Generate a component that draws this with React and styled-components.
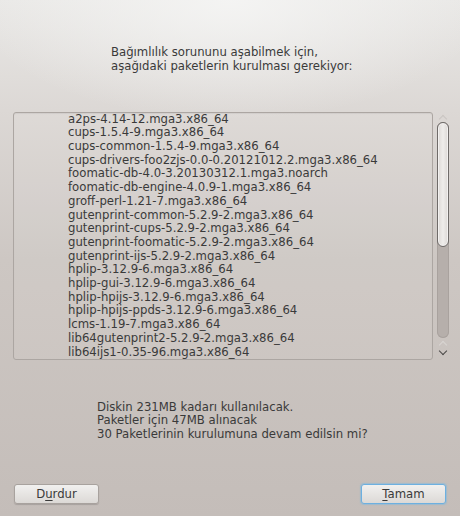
import styled, { createGlobalStyle } from "styled-components";

const GlobalStyle = createGlobalStyle`
  html, body {
    margin: 0;
    padding: 0;
  }
  body {
    font-family: "DejaVu Sans", "Liberation Sans", sans-serif;
    color: #3a3a3a;
  }
`;

const packages = [
  "a2ps-4.14-12.mga3.x86_64",
  "cups-1.5.4-9.mga3.x86_64",
  "cups-common-1.5.4-9.mga3.x86_64",
  "cups-drivers-foo2zjs-0.0-0.20121012.2.mga3.x86_64",
  "foomatic-db-4.0-3.20130312.1.mga3.noarch",
  "foomatic-db-engine-4.0.9-1.mga3.x86_64",
  "groff-perl-1.21-7.mga3.x86_64",
  "gutenprint-common-5.2.9-2.mga3.x86_64",
  "gutenprint-cups-5.2.9-2.mga3.x86_64",
  "gutenprint-foomatic-5.2.9-2.mga3.x86_64",
  "gutenprint-ijs-5.2.9-2.mga3.x86_64",
  "hplip-3.12.9-6.mga3.x86_64",
  "hplip-gui-3.12.9-6.mga3.x86_64",
  "hplip-hpijs-3.12.9-6.mga3.x86_64",
  "hplip-hpijs-ppds-3.12.9-6.mga3.x86_64",
  "lcms-1.19-7.mga3.x86_64",
  "lib64gutenprint2-5.2.9-2.mga3.x86_64",
  "lib64ijs1-0.35-96.mga3.x86_64",
];

export default function App() {
  return (
    <>
      <GlobalStyle />
      <Dialog>
        <Message $indent={111} $top={46}>
          Bağımlılık sorununu aşabilmek için,
          <br />
          aşağıdaki paketlerin kurulması gerekiyor:
        </Message>

        <ListRow>
          <ListBox>
            {packages.map((p) => (
              <ListItem key={p}>{p}</ListItem>
            ))}
          </ListBox>
          <ScrollBar>
            <Arrow>
              <Chevron $up />
            </Arrow>
            <Groove>
              <Thumb />
            </Groove>
            <Arrow>
              <Chevron $up $faint />
            </Arrow>
            <Arrow>
              <Chevron />
            </Arrow>
          </ScrollBar>
        </ListRow>

        <Message $indent={97} $top={41}>
          Diskin 231MB kadarı kullanılacak.
          <br />
          Paketler için 47MB alınacak
          <br />
          30 Paketlerinin kurulumuna devam edilsin mi?
        </Message>

        <ButtonBar>
          <Button>
            D<u>u</u>rdur
          </Button>
          <Button $focused>
            <u>T</u>amam
          </Button>
        </ButtonBar>
      </Dialog>
    </>
  );
}

const Dialog = styled.div`
  width: 460px;
  height: 516px;
  box-sizing: border-box;
  display: flex;
  flex-direction: column;
  background: radial-gradient(
      ellipse 260px 120px at 50% 0,
      rgba(245, 245, 244, 0.9),
      rgba(245, 245, 244, 0)
    ),
    linear-gradient(#e9e8e6 0, #dcd8d5 110px, #cdc7c3 260px, #c4bdb9 516px);
`;

const Message = styled.div`
  padding-left: ${(p) => p.$indent}px;
  margin-top: ${(p) => p.$top}px;
  font-size: 11.7px;
  line-height: 13.8px;
  white-space: nowrap;
`;

const ListRow = styled.div`
  display: flex;
  margin: 38px 0 0 13px;
  height: 248px;
  gap: 3px;
`;

const ListBox = styled.div`
  width: 420px;
  box-sizing: border-box;
  border: 1px solid #aca6a2;
  border-radius: 3px;
  background: rgba(255, 255, 255, 0.06);
  box-shadow: inset 0 1px 1px rgba(0, 0, 0, 0.06);
  padding: 0 0 0 54px;
  overflow: hidden;
`;

const ListItem = styled.div`
  font-size: 11.7px;
  line-height: 13.7px;
  white-space: nowrap;
`;

const ScrollBar = styled.div`
  width: 13px;
  display: flex;
  flex-direction: column;
  align-items: center;
`;

const Arrow = styled.div`
  height: 10px;
  width: 13px;
  display: flex;
  align-items: center;
  justify-content: center;
`;

const Chevron = styled.span`
  width: 5px;
  height: 5px;
  border-left: 1.3px solid ${(p) => (p.$faint ? "#d9d5d2" : p.$up ? "#c9c5c2" : "#4a4847")};
  border-top: 1.3px solid ${(p) => (p.$faint ? "#d9d5d2" : p.$up ? "#c9c5c2" : "#4a4847")};
  transform: ${(p) => (p.$up ? "translateY(2px) rotate(45deg)" : "translateY(-2px) rotate(225deg)")};
`;

const Groove = styled.div`
  width: 12px;
  height: 216px;
  box-sizing: border-box;
  border-radius: 6px;
  background: #b6afab;
  box-shadow: inset 0 0 0 1px #a9a29e;
  display: flex;
  flex-direction: column;
`;

const Thumb = styled.div`
  height: 125px;
  box-sizing: border-box;
  border: 1px solid #6f6b69;
  border-radius: 6px;
  background: linear-gradient(90deg, #dcd8d5, #efedeb 50%, #dcd8d5);
  box-shadow: inset 0 0 0 1px #f3f1f0;
`;

const ButtonBar = styled.div`
  margin-top: 42px;
  padding: 0 14px;
  display: flex;
  justify-content: space-between;
`;

const Button = styled.button`
  width: 85px;
  height: 20px;
  padding: 0;
  font-family: "DejaVu Sans", "Liberation Sans", sans-serif;
  font-size: 11.7px;
  color: #3a3a3a;
  border-radius: 3px;
  border: 1px solid ${(p) => (p.$focused ? "#6db0e0" : "#a8a29e")};
  background: linear-gradient(#f1f0ef, #dcd9d6);
  box-shadow: ${(p) =>
    p.$focused
      ? "0 0 1px 1px rgba(120, 185, 230, 0.5)"
      : "0 1px 1px rgba(0, 0, 0, 0.15)"};

  u {
    text-underline-offset: 2px;
  }
`;
